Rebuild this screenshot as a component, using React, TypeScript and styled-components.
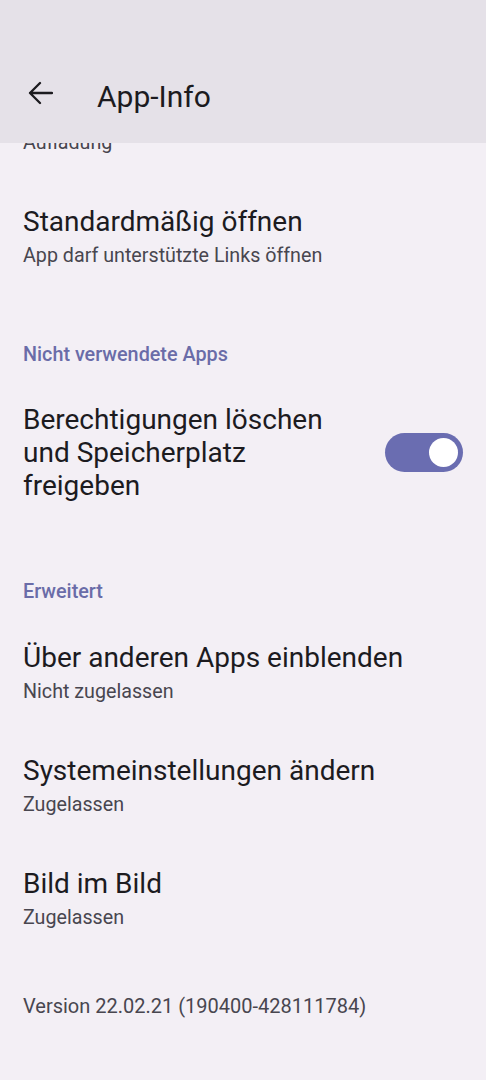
import React from 'react';
import styled, { createGlobalStyle } from 'styled-components';

const GlobalStyle = createGlobalStyle`
  html, body {
    margin: 0;
    padding: 0;
    background: #f3eff5;
  }
  body {
    font-family: Roboto, "Noto Sans", sans-serif;
    -webkit-font-smoothing: antialiased;
  }
`

const Screen = styled.div`
  position: relative;
  width: 486px;
  height: 1080px;
  overflow: hidden;
  background: #f3eff5;
`

const TopBar = styled.header`
  position: absolute;
  top: 0;
  left: 0;
  right: 0;
  height: 143px;
  background: #e5e1e8;
  display: flex;
  align-items: flex-end;
  padding: 0 0 27px 22px;
  box-sizing: border-box;
  z-index: 2;
`

const BackButton = styled.button`
  display: flex;
  align-items: center;
  justify-content: center;
  width: 36px;
  height: 36px;
  margin-bottom: 5px;
  padding: 0;
  border: none;
  background: none;
  color: #1c1b1f;
`

const Title = styled.h1`
  margin: 0 0 0 39px;
  font-size: 30px;
  font-weight: 400;
  line-height: 38px;
  color: #1c1b1f;
`

const List = styled.main`
  display: flex;
  flex-direction: column;
  padding-top: 67px;
`

const Item = styled.div`
  display: flex;
  align-items: center;
  justify-content: space-between;
  padding: 24px 23px;
  gap: 20px;
`

const TextBlock = styled.div`
  display: flex;
  flex-direction: column;
`

const ItemTitle = styled.div<{ $multi?: boolean }>`
  font-size: 28px;
  line-height: ${p => (p.$multi ? '33px' : '36px')};
  color: #1c1b1f;
`

const ItemSummary = styled.div`
  margin-top: 3px;
  font-size: 19.7px;
  line-height: 26px;
  color: #48464f;
`

const SectionHeader = styled.div<{ $top: number }>`
  padding: ${p => p.$top}px 23px 12px;
  font-size: 19.8px;
  font-weight: 500;
  line-height: 24px;
  color: #6a6ca8;
`

const Track = styled.div<{ $on: boolean }>`
  flex: none;
  width: 78px;
  height: 39px;
  border-radius: 20px;
  background: ${p => (p.$on ? '#6a6db1' : '#c9c5d0')};
  display: flex;
  align-items: center;
  justify-content: ${p => (p.$on ? 'flex-end' : 'flex-start')};
  padding: 0 5px;
  box-sizing: border-box;
`

const Thumb = styled.div`
  width: 29px;
  height: 29px;
  border-radius: 50%;
  background: #ffffff;
`

const Version = styled.div`
  padding: 39px 23px 0;
  font-size: 20px;
  line-height: 24px;
  color: #48464f;
`

const BackArrow = () => (
  <svg width="26" height="24" viewBox="0 0 26 24" fill="none">
    <path d="M25 12H3M13 2L3 12l10 10" stroke="currentColor" strokeWidth="2.3" strokeLinecap="round" strokeLinejoin="round" />
  </svg>
)

const Switch = ({ on }: { on: boolean }) => (
  <Track $on={on}>
    <Thumb />
  </Track>
)

const PrefItem = ({ title, summary }: { title: string; summary: string }) => (
  <Item>
    <TextBlock>
      <ItemTitle>{title}</ItemTitle>
      <ItemSummary>{summary}</ItemSummary>
    </TextBlock>
  </Item>
)

export default function App() {
  return (
    <Screen>
      <GlobalStyle />
      <TopBar>
        <BackButton aria-label="Zurück">
          <BackArrow />
        </BackButton>
        <Title>App-Info</Title>
      </TopBar>
      <List>
        <PrefItem title="Akku" summary="Aufladung" />
        <PrefItem title="Standardmäßig öffnen" summary="App darf unterstützte Links öffnen" />
        <SectionHeader $top={50}>Nicht verwendete Apps</SectionHeader>
        <Item>
          <TextBlock>
            <ItemTitle $multi>
              Berechtigungen löschen<br />und Speicherplatz<br />freigeben
            </ItemTitle>
          </TextBlock>
          <Switch on />
        </Item>
        <SectionHeader $top={54}>Erweitert</SectionHeader>
        <PrefItem title="Über anderen Apps einblenden" summary="Nicht zugelassen" />
        <PrefItem title="Systemeinstellungen ändern" summary="Zugelassen" />
        <PrefItem title="Bild im Bild" summary="Zugelassen" />
        <Version>Version 22.02.21 (190400-428111784)</Version>
      </List>
    </Screen>
  );
}
